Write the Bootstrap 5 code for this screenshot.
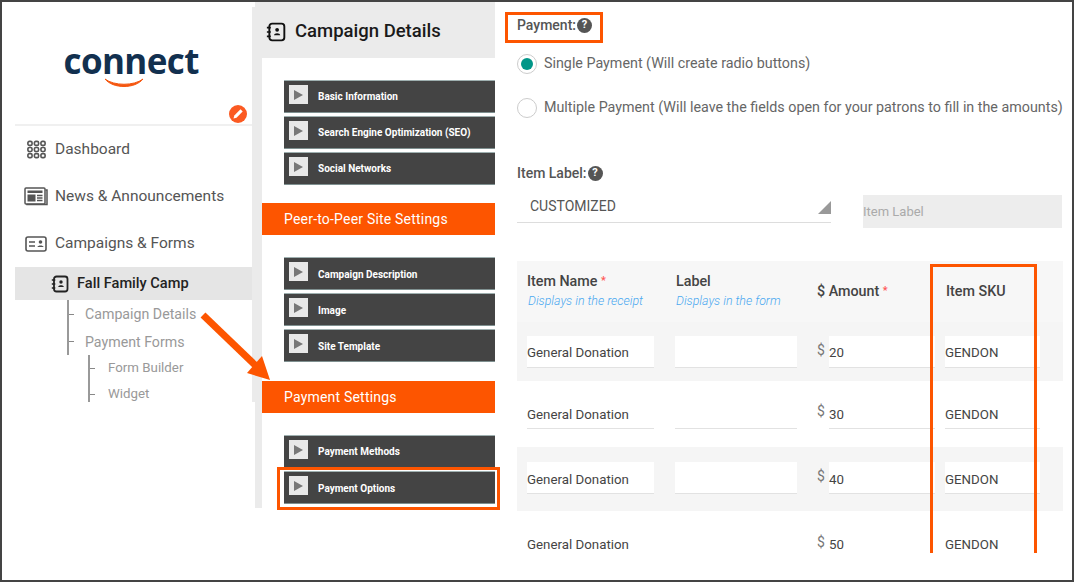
<!DOCTYPE html>
<html lang="en"><head><meta charset="utf-8"><title>Payment Options</title>
<link href="https://cdn.jsdelivr.net/npm/bootstrap@5.3.0/dist/css/bootstrap.min.css" rel="stylesheet">
<style>
html,body{margin:0;height:582px;overflow:hidden;background:#fff}
body{font-family:Roboto,"Liberation Sans",sans-serif;color:#555}
.frame{width:1074px;height:582px;border:2px solid #444;position:relative;overflow:hidden;background:#fff}
.side{width:253px;flex:none;margin-top:5px;height:395px;border-right:3px solid #ebebeb}
.logo-area{margin-left:13px;height:119px;border-bottom:2px solid #f0f0f0;position:relative;display:flex;justify-content:center;padding-right:5px}
.logo-word{font-family:"Open Sans",sans-serif;font-weight:700;font-size:35px;line-height:1;letter-spacing:-.6px;color:#12304f;margin-top:36px;width:135px;white-space:nowrap}
.smile{display:block;margin:-2px 0 0 40px}
.edit-dot{position:absolute;right:5px;top:98px;width:18px;height:18px;border-radius:50%;background:#fb5a22;display:flex;align-items:center;justify-content:center}
.menu-item{margin-left:13px;height:47px;display:flex;align-items:center;font-size:15.5px;color:#555}
.menu-ico{width:40px;flex:none;display:flex;justify-content:center;padding-left:2px}
.active-row{margin-left:13px;height:33px;background:#e5e5e5;display:flex;align-items:center;padding-left:36px;padding-top:1px;color:#222;font-size:14.6px;font-weight:500}
.tree{margin-left:65px;border-left:2px solid #999;width:1px;height:55px;position:relative}
.tree2{margin-left:86px;height:47px}
.tree-label{position:absolute;white-space:nowrap;font-size:14.2px;color:#999;left:16px;line-height:18px}
.tree-tick{position:absolute;left:0;width:5px;height:1px;background:#888}
.tree2 .tree-label{font-size:13.3px;left:18px}
.mid{width:240px;flex:none;background:#ebebeb;padding-left:7px;height:506px;position:relative}
.mid-inner{background:#fff;height:450px}
.mid-head{height:56px;margin-left:-7px;display:flex;align-items:center;font-size:18.5px;font-weight:500;color:#1a1a1a;padding-left:11px;padding-top:3px}
.mid-head svg{margin-right:9px}
.bars{padding-left:22px;padding-top:22px}
.sbar{height:33px;background:#444;border-top:1px solid #9fb0b0;border-bottom:1px solid #7f9090;display:flex;align-items:flex-start;color:#fff;font-size:10px;font-weight:700;margin-bottom:3px;padding:4px 0 0 5px}
.sbar .sq{width:19px;height:19px;background:#e8e8e8;display:flex;align-items:center;justify-content:center;margin-right:10px;flex:none}
.sbar span{line-height:1;margin-top:7px}
.bars-low .sbar span{margin-top:8px}
.orange{height:32px;background:#fd5500;color:#fff;font-size:14px;letter-spacing:.2px;display:flex;align-items:center;padding-left:22px}
.main{flex:1;position:relative;padding-left:22px;padding-right:10px}
.lbl{font-size:14px;font-weight:500;color:#555;display:flex;align-items:center;line-height:18px}
.q{width:15px;height:15px;border-radius:50%;background:#555;color:#fff;font-size:11px;font-weight:700;display:inline-flex;align-items:center;justify-content:center;margin-left:1px}
.rad{display:flex;align-items:center;font-size:14.3px;color:#666;height:22px;white-space:nowrap}
.rad i{width:20px;height:20px;border:1px solid #ccc;border-radius:50%;margin-right:7px;display:flex;align-items:center;justify-content:center;flex:none}
.rad i b{width:12px;height:12px;border-radius:50%;background:#009688;display:block}
.sel{width:314px;height:28px;border-bottom:1px solid #ddd;padding-left:13px;font-size:14px;color:#555;line-height:22px;position:relative}
.sel svg{position:absolute;right:0;top:6px}
.ilabel{width:199px;height:33px;background:#ededed;color:#aaa;font-size:13px;line-height:34px;margin-left:32px}
.thead{background:#f7f7f7;height:61px;position:relative}
.trow{position:relative}
.gray{background:#f5f5f5}
.cell{position:absolute;font-size:14px;color:#444;white-space:nowrap}
.h{font-weight:500;color:#444;font-size:14.3px;line-height:18px}
.hint{font-style:italic;font-size:12.4px;color:#4aa8f0;font-weight:300;line-height:16px}
.star{color:#f55;font-size:11px;vertical-align:2px}
.fld{position:absolute;height:32px;border-bottom:1px solid #e2e2e2;font-size:13.3px;color:#444;line-height:35px;white-space:nowrap}
.first-row .fld{line-height:33px}
.gray .fld{background:#fff}
.dollar{position:absolute;font-size:14px;color:#777}
.anno{position:absolute;border:3px solid #fd5500;pointer-events:none}
</style></head><body>
<div class="frame d-flex">
  <div class="side">
    <div class="logo-area">
      <div class="logo-word">connect
        <svg class="smile" width="40" height="12" viewBox="0 0 40 12"><path d="M1 3C10 10 30 10 39 3C31 13 9 13 1 3Z" fill="#f5560f" stroke="#f5560f" stroke-width="1"/></svg>
      </div>
      <div class="edit-dot"><svg width="14" height="14" viewBox="0 0 14 14"><path d="M2.500 11.500l.8-3L9.500 2.300l2.200 2.200-6.200 6.200z" fill="#fff"/></svg></div>
    </div>
    <div class="menu-item"><span class="menu-ico"><svg width="19" height="19" viewBox="0 0 21 21" fill="none" stroke="#555" stroke-width="1.800"><g id="d"><rect x="1" y="1.500" width="4.600" height="4.400" rx="1.600"/><rect x="8.200" y="1.500" width="4.600" height="4.400" rx="1.600"/><rect x="15.400" y="1.500" width="4.600" height="4.400" rx="1.600"/></g><use href="#d" y="6.800"/><use href="#d" y="13.600"/></svg></span><span>Dashboard</span></div>
    <div class="menu-item"><span class="menu-ico"><svg width="24" height="19" viewBox="0 0 24 19"><rect x="1" y="1" width="20" height="16" rx="1" fill="#fff" stroke="#555" stroke-width="1.500"/><path d="M21.500 3H23V17.500H3V17" fill="none" stroke="#555" stroke-width="1.500"/><rect x="3.500" y="3.500" width="15" height="2.500" fill="#555"/><rect x="3.500" y="7.500" width="8" height="7" fill="#555"/><path d="M13 8.500h5.500M13 11h5.500M13 13.500h5.500" stroke="#555" stroke-width="1.300"/></svg></span><span>News &amp; Announcements</span></div>
    <div class="menu-item"><span class="menu-ico"><svg width="22" height="16" viewBox="0 0 22 16"><rect x="1" y="1" width="20" height="14" rx="2" fill="none" stroke="#555" stroke-width="1.600"/><path d="M4 6h6M4 10h6" stroke="#555" stroke-width="1.600"/><circle cx="15.500" cy="6" r="1.800" fill="#555"/><path d="M12.500 11c0-2 6-2 6 0z" fill="#555"/></svg></span><span>Campaigns &amp; Forms</span></div>
    <div class="active-row"><svg class="me-2" width="18" height="18" viewBox="0 0 18 18"><rect x="3" y="1.500" width="13.500" height="15" rx="2.500" fill="none" stroke="#222" stroke-width="1.800"/><path d="M.8 5h3.500M.8 9h3.500M.8 13h3.500" stroke="#222" stroke-width="1.500"/><circle cx="10" cy="7" r="1.700" fill="#222"/><path d="M7.200 12c0-2.500 5.600-2.500 5.600 0z" fill="#222"/></svg>Fall Family Camp</div>
    <div class="tree"><i class="tree-tick" style="top:14px"></i><i class="tree-tick" style="top:41px"></i><span class="tree-label" style="top:5px">Campaign Details</span><span class="tree-label" style="top:33px">Payment Forms</span></div>
    <div class="tree tree2"><i class="tree-tick" style="top:13px"></i><i class="tree-tick" style="top:39px"></i><span class="tree-label" style="top:4px">Form Builder</span><span class="tree-label" style="top:30px">Widget</span></div>
  </div>
  <div class="mid">
    <div class="mid-head"><svg width="20" height="20" viewBox="0 0 18 18"><rect x="3" y="1.500" width="13.500" height="15" rx="2.500" fill="none" stroke="#111" stroke-width="1.700"/><path d="M.8 5h3.500M.8 9h3.500M.8 13h3.500" stroke="#111" stroke-width="1.500"/><circle cx="10" cy="7" r="1.700" fill="#111"/><path d="M7.200 12c0-2.500 5.600-2.500 5.600 0z" fill="#111"/></svg>Campaign Details</div>
    <div class="mid-inner">
      <div class="bars">
        <div class="sbar"><div class="sq"><svg width="9" height="10"><path d="M0 0l9 5-9 5z" fill="#777"/></svg></div><span>Basic Information</span></div>
        <div class="sbar"><div class="sq"><svg width="9" height="10"><path d="M0 0l9 5-9 5z" fill="#777"/></svg></div><span>Search Engine Optimization (SEO)</span></div>
        <div class="sbar"><div class="sq"><svg width="9" height="10"><path d="M0 0l9 5-9 5z" fill="#777"/></svg></div><span>Social Networks</span></div>
      </div>
      <div class="orange" style="margin-top:18px">Peer-to-Peer Site Settings</div>
      <div class="bars bars-low">
        <div class="sbar"><div class="sq"><svg width="9" height="10"><path d="M0 0l9 5-9 5z" fill="#777"/></svg></div><span>Campaign Description</span></div>
        <div class="sbar"><div class="sq"><svg width="9" height="10"><path d="M0 0l9 5-9 5z" fill="#777"/></svg></div><span>Image</span></div>
        <div class="sbar"><div class="sq"><svg width="9" height="10"><path d="M0 0l9 5-9 5z" fill="#777"/></svg></div><span>Site Template</span></div>
      </div>
      <div class="orange" style="margin-top:19px">Payment Settings</div>
      <div class="bars">
        <div class="sbar"><div class="sq"><svg width="9" height="10"><path d="M0 0l9 5-9 5z" fill="#777"/></svg></div><span>Payment Methods</span></div>
        <div class="sbar bars-low"><div class="sq"><svg width="9" height="10"><path d="M0 0l9 5-9 5z" fill="#777"/></svg></div><span style="margin-top:8px">Payment Options</span></div>
      </div>
    </div>
  </div>
  <div class="main">
    <div class="lbl" style="margin-top:14px">Payment:<span class="q">?</span></div>
    <div class="rad" style="margin-top:19px"><i><b></b></i>Single Payment (Will create radio buttons)</div>
    <div class="rad" style="margin-top:22px"><i></i>Multiple Payment (Will leave the fields open for your patrons to fill in the amounts)</div>
    <div class="lbl" style="margin-top:45px">Item Label:<span class="q">?</span></div>
    <div class="d-flex" style="margin-top:13px;height:66px">
      <div class="sel">CUSTOMIZED<svg width="13" height="13"><path d="M13 0V13H0z" fill="#999"/></svg></div>
      <div class="ilabel">Item Label</div>
    </div>
    <div class="thead">
      <div class="cell h" style="left:10px;top:11px">Item Name <span class="star">*</span></div>
      <div class="cell hint" style="left:11px;top:32px">Displays in the receipt</div>
      <div class="cell h" style="left:159px;top:11px">Label</div>
      <div class="cell hint" style="left:159px;top:32px">Displays in the form</div>
      <div class="cell h" style="left:300px;top:21px">$ Amount <span class="star">*</span></div>
      <div class="cell h" style="left:429px;top:21px">Item SKU</div>
    </div>
    <div class="trow gray first-row" style="height:59px"><div class="fld" style="left:10px;width:127px;top:14px">General Donation</div><div class="fld" style="left:158px;width:122px;top:14px"></div><span class="dollar" style="left:300px;top:18px">$</span><div class="fld" style="left:312px;width:106px;top:14px">20</div><div class="fld" style="left:428px;width:95px;top:14px">GENDON</div></div>
    <div class="trow" style="height:66px"><div class="fld" style="left:10px;width:127px;top:16px">General Donation</div><div class="fld" style="left:158px;width:122px;top:16px"></div><span class="dollar" style="left:300px;top:20px">$</span><div class="fld" style="left:312px;width:106px;top:16px">30</div><div class="fld" style="left:428px;width:95px;top:16px">GENDON</div></div>
    <div class="trow gray" style="height:64px"><div class="fld" style="left:10px;width:127px;top:15px">General Donation</div><div class="fld" style="left:158px;width:122px;top:15px"></div><span class="dollar" style="left:300px;top:19px">$</span><div class="fld" style="left:312px;width:106px;top:15px">40</div><div class="fld" style="left:428px;width:95px;top:15px">GENDON</div></div>
    <div class="trow" style="height:60px"><div class="fld border-0" style="left:10px;width:127px;top:16px">General Donation</div><span class="dollar" style="left:300px;top:21px">$</span><div class="fld border-0" style="left:312px;width:106px;top:16px">50</div><div class="fld border-0" style="left:428px;width:95px;top:16px">GENDON</div></div>
  </div>
  <div class="anno" style="left:503px;top:10px;width:98px;height:31px"></div>
  <div class="anno" style="left:275px;top:465px;width:223px;height:43px"></div>
  <div class="anno" style="left:928px;top:262px;width:107px;height:289px;border-bottom:0"></div>
  <svg class="position-absolute" style="left:195px;top:308px" width="80" height="80" viewBox="0 0 80 80"><path d="M6 5L58 55" stroke="#fd5500" stroke-width="7"/><path d="M73 70L50 63L65 46z" fill="#fd5500"/></svg>
</div>
<script src="https://cdn.jsdelivr.net/npm/bootstrap@5.3.0/dist/js/bootstrap.bundle.min.js"></script>
</body></html>
